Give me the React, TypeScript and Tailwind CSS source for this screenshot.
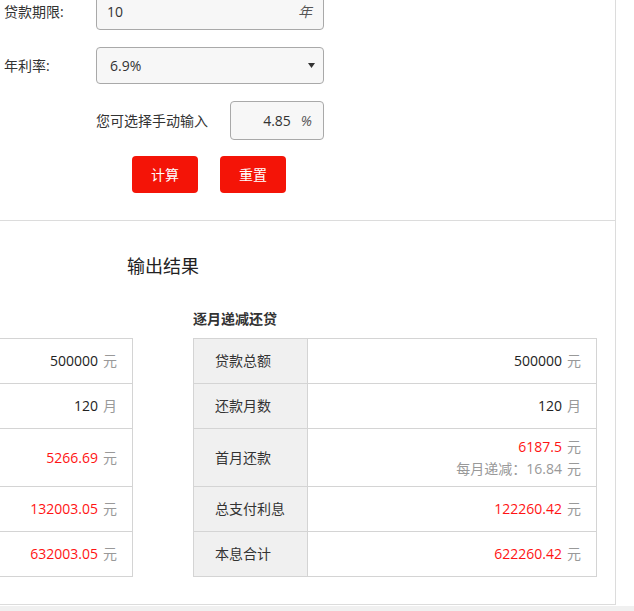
import React from 'react'

type Row = { label: string; value: string; unit: string; red?: boolean; sub?: string; tall?: boolean }

const equalRows: Row[] = [
    { label: '贷款总额', value: '500000', unit: '元' },
    { label: '还款月数', value: '120', unit: '月' },
    { label: '每月还款', value: '5266.69', unit: '元', red: true, tall: true },
    { label: '总支付利息', value: '132003.05', unit: '元', red: true },
    { label: '本息合计', value: '632003.05', unit: '元', red: true },
]

const decRows: Row[] = [
    { label: '贷款总额', value: '500000', unit: '元' },
    { label: '还款月数', value: '120', unit: '月' },
    { label: '首月还款', value: '6187.5', unit: '元', red: true, tall: true, sub: '每月递减：16.84' },
    { label: '总支付利息', value: '122260.42', unit: '元', red: true },
    { label: '本息合计', value: '622260.42', unit: '元', red: true },
]

function ResultTable({ title, rows }: { title: string; rows: Row[] }) {
    return (
        <div className="w-[404px]">
            <div className="text-[14px] leading-[20px] font-bold text-[#333] mb-[9px]">{title}</div>
            <table className="w-[404px] border-collapse text-[14px]">
                <tbody>
                    {rows.map((r) => (
                        <tr key={r.label} className={r.tall ? 'h-[58px]' : 'h-[45px]'}>
                            <td className="w-[114px] border border-[#d4d4d4] bg-[#f0f0f0] pl-[21px] text-left text-[#333] leading-[20px]">
                                {r.label}
                            </td>
                            <td className="border border-[#d4d4d4] pr-[15px] text-right leading-[22px]">
                                <div>
                                    <span className={r.red ? 'text-[#ff1414]' : 'text-[#222]'}>{r.value}</span>
                                    <span className="ml-[5px] text-[#999]">{r.unit}</span>
                                </div>
                                {r.sub && (
                                    <div className="text-[#999]">
                                        {r.sub}
                                        <span className="ml-[5px]">元</span>
                                    </div>
                                )}
                            </td>
                        </tr>
                    ))}
                </tbody>
            </table>
        </div>
    )
}

export default function App() {
    return (
        <div className="w-[634px] h-[611px] overflow-hidden bg-white font-['Open_Sans','Noto_Sans_CJK_SC',sans-serif] text-[#333]">
            <div className="w-[616px] h-[605px] border-r border-b border-[#dcdcdc] overflow-hidden">
                {/* Form */}
                <div className="h-[221px] flex flex-col border-b border-[#dcdcdc]">
                    <div className="-mt-[7px] flex items-center h-[37px]">
                        <div className="w-[96px] pl-[4px] text-[14px] leading-[20px]">贷款期限:</div>
                        <div className="w-[228px] h-[37px] flex items-center justify-between rounded-[4px] border border-[#a9a9a9] bg-[#f7f7f7] pl-[10px] pr-[11px]">
                            <span className="text-[14px] text-[#333]">10</span>
                            <span className="text-[14px] italic text-[#555]">年</span>
                        </div>
                    </div>
                    <div className="mt-[17px] flex items-center h-[37px]">
                        <div className="w-[96px] pl-[4px] text-[14px] leading-[20px]">年利率:</div>
                        <div className="w-[228px] h-[37px] flex items-center justify-between rounded-[4px] border border-[#a9a9a9] bg-[#f7f7f7] pl-[13px] pr-[8px]">
                            <span className="text-[14px] text-[#333]">6.9%</span>
                            <svg width="7" height="5" viewBox="0 0 7 5"><path d="M0 0h7L3.5 5z" fill="#333" /></svg>
                        </div>
                    </div>
                    <div className="mt-[17px] flex items-center h-[39px] pl-[96px]">
                        <div className="w-[134px] text-[14px] leading-[20px]">您可选择手动输入</div>
                        <div className="w-[94px] h-[39px] flex items-center justify-end gap-[10px] rounded-[4px] border border-[#a9a9a9] bg-[#f7f7f7] pr-[11px]">
                            <span className="text-[14px] text-[#333]">4.85</span>
                            <span className="text-[14px] italic text-[#555]">%</span>
                        </div>
                    </div>
                    <div className="mt-[16px] flex gap-[22px] pl-[132px]">
                        <button className="w-[66px] h-[37px] rounded-[4px] bg-[#f41407] text-[14px] text-white">计算</button>
                        <button className="w-[66px] h-[37px] rounded-[4px] bg-[#f41407] text-[14px] text-white">重置</button>
                    </div>
                </div>

                {/* Results */}
                <div className="-ml-[271px] w-[868px] flex flex-col">
                    <div className="mt-[33px] text-center text-[18px] leading-[24px] text-[#222]">输出结果</div>
                    <div className="mt-[31px] flex gap-[60px]">
                        <ResultTable title="等额本息还款" rows={equalRows} />
                        <ResultTable title="逐月递减还贷" rows={decRows} />
                    </div>
                </div>
            </div>
            <div className="mt-[1px] h-[5px] bg-[#f0f0f0]" />
        </div>
    )
}
